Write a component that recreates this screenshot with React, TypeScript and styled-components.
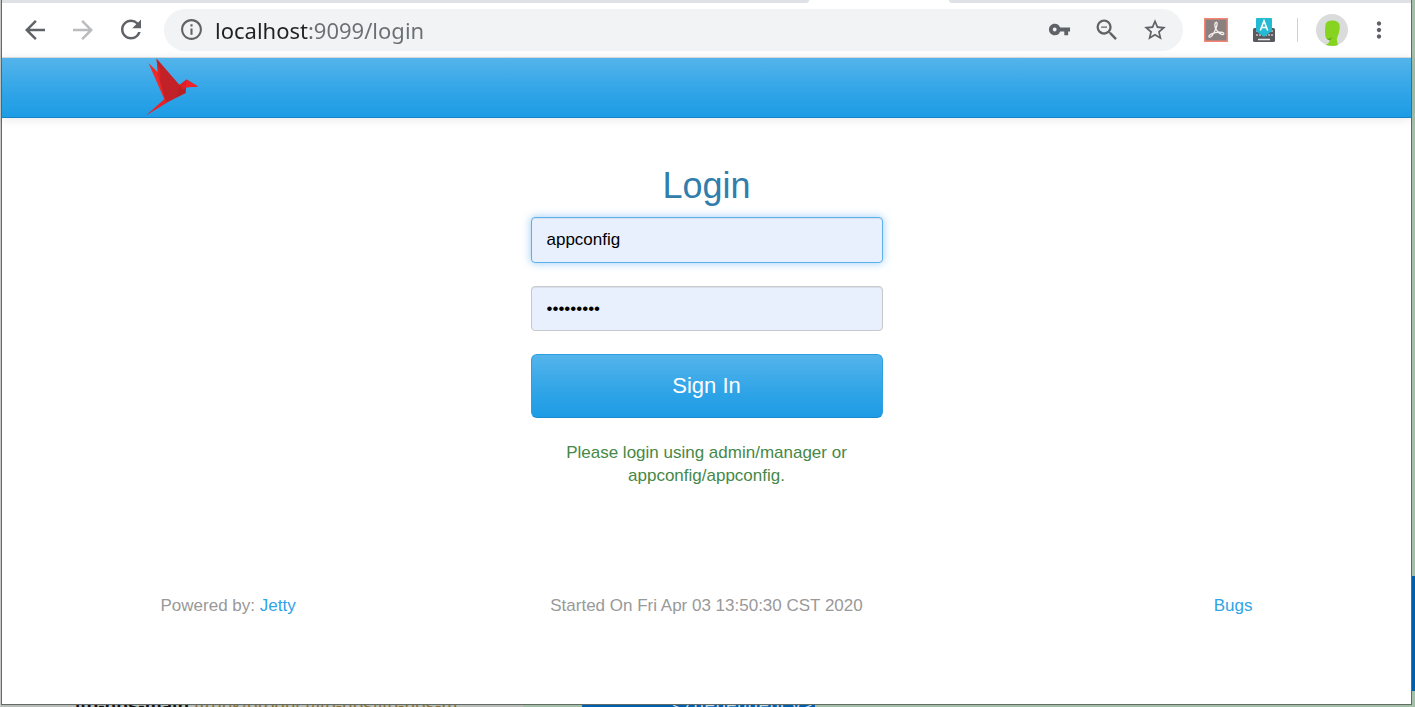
import React, { useState } from "react";
import styled, { createGlobalStyle } from "styled-components";
import {
  MdArrowBack,
  MdArrowForward,
  MdInfoOutline,
  MdMoreVert,
  MdRefresh,
  MdStarBorder,
  MdVpnKey,
  MdZoomOut,
} from "react-icons/md";

const GlobalStyle = createGlobalStyle`
  * { box-sizing: border-box; }
  body {
    margin: 0;
    font-family: "Liberation Sans", Arial, sans-serif;
    font-size: 17px;
    line-height: 23px;
    color: #999;
  }
`;

const Desktop = styled.div`
  display: grid;
  grid-template-columns: minmax(0, 1fr) 3px;
  grid-template-rows: 1fr 2px;
  min-height: 100vh;
  padding-left: 1px;
  background: linear-gradient(90deg, #c4c8c4 1px, #a3bfa8 1px);
`;

const BrowserWindow = styled.div`
  display: flex;
  flex-direction: column;
  border: 1px solid #636b66;
  border-top: 0;
  background: #fff;
`;

const RightEdge = styled.div`
  display: flex;
  flex-direction: column;
  justify-content: flex-end;
  padding-bottom: 14px;
`;

const EdgeSelection = styled.div`
  height: 115px;
  background: #0060b0;
`;

const Behind = styled.div`
  display: flex;
  grid-column: 1 / -1;
  overflow: hidden;
  height: 2px;
  font-size: 19px;
  line-height: 2px;
  white-space: pre;
`;

const ProjectRow = styled.div`
  flex: 0 0 522px;
  padding-left: 74px;
  overflow: hidden;
  background: #b9bdb9;
  color: #8a7430;
`;

const ProjectName = styled.b`
  color: #111;
`;

const EditorRow = styled.div`
  flex: 0 0 292px;
  padding-left: 59px;
  overflow: hidden;
`;

const SelectedCode = styled.div`
  padding-left: 90px;
  background: #0060b0;
  color: #c8d8e4;
  font-family: "Liberation Mono", monospace;
  font-size: 18px;
`;

const TabStrip = styled.div`
  display: flex;
  height: 3px;
  background: #fff;
`;

const InactiveTabs = styled.div<{ $side: "left" | "right" }>`
  flex: ${(p) => (p.$side === "left" ? "807" : "462")} 1 0;
  background: #dee1e6;
  border-radius: ${(p) => (p.$side === "left" ? "0 0 8px 0" : "0 0 0 8px")};
`;

const ActiveTab = styled.div`
  flex: 0 0 140px;
`;

const Toolbar = styled.div`
  display: flex;
  align-items: center;
  gap: 18px;
  height: 55px;
  padding: 0 19px 1px 18px;
  border-bottom: 1px solid #dcdfe2;
`;

const IconButton = styled.button<{ $faded?: boolean; $width?: number }>`
  display: flex;
  flex: none;
  align-items: center;
  justify-content: center;
  width: ${(p) => p.$width ?? 30}px;
  height: 30px;
  padding: 0;
  border: 0;
  background: none;
  color: ${(p) => (p.$faded ? "#babcbe" : "#5f6368")};
`;

const Omnibox = styled.div`
  display: flex;
  flex: 1;
  align-items: center;
  gap: 18px;
  min-width: 0;
  height: 42px;
  padding: 0 13px 0 12px;
  border-radius: 21px;
  background: #f1f3f4;
`;

const AddressGroup = styled.div`
  display: flex;
  flex: 1;
  align-items: center;
  gap: 9px;
  min-width: 0;
`;

const AddressInput = styled.input`
  flex: 1;
  min-width: 0;
  height: 30px;
  padding: 0;
  border: 0;
  outline: 0;
  font: 22px/30px "Noto Sans", sans-serif;
  color: #5f6368;
  background: linear-gradient(90deg, #202124 94px, #6b6f74 94px);
  background-clip: text;
  -webkit-background-clip: text;
  -webkit-text-fill-color: transparent;
`;

const Divider = styled.div`
  width: 1px;
  height: 24px;
  background: #cfd1d4;
`;

const NavBar = styled.header`
  height: 60px;
  border-bottom: 1px solid #1683c9;
  background: linear-gradient(#54b4eb, #2fa4e7 60%, #1d9ce5);
  box-shadow: 0 1px 10px rgba(0, 0, 0, 0.1);
`;

const NavInner = styled.div`
  width: 100%;
  max-width: 1122px;
  margin: 0 auto;
`;

const Brand = styled.a`
  display: block;
  width: 53px;
  height: 59px;
`;

const Main = styled.main`
  width: 352px;
  max-width: 100%;
  margin: 48px auto 0;
  text-align: center;
`;

const Title = styled.h1`
  margin: 0 0 11px;
  font-size: 36px;
  font-weight: 400;
  line-height: 40px;
  color: #317eac;
`;

const LoginForm = styled.form`
  display: flex;
  flex-direction: column;
  gap: 23px;
`;

const Field = styled.input<{ $active?: boolean }>`
  width: 100%;
  height: ${(p) => (p.$active ? 46 : 45)}px;
  padding: 0 15px;
  border: 1px solid ${(p) => (p.$active ? "#5fb0ea" : "#c8c9cc")};
  border-radius: 4px;
  outline: 0;
  background: #e8f0fe;
  color: #000;
  font: 17px/23px "Liberation Sans", Arial, sans-serif;
  box-shadow: ${(p) =>
    p.$active
      ? "inset 0 1px 1px rgba(0,0,0,.075), 0 0 8px rgba(82,168,236,.6)"
      : "inset 0 1px 1px rgba(0,0,0,.075)"};
`;

const SubmitButton = styled.button`
  height: 64px;
  border: 1px solid #2a9fe2;
  border-bottom-color: #178acc;
  border-radius: 6px;
  background: linear-gradient(#54b4eb, #2fa4e7 60%, #1d9ce5);
  color: #fff;
  font: 22px/28px "Liberation Sans", Arial, sans-serif;
`;

const Hint = styled.p`
  margin: 23px 0 0;
  color: #468847;
`;

const Footer = styled.footer`
  display: grid;
  grid-template-columns: 1fr auto 1fr;
  width: 100%;
  max-width: 1122px;
  margin: 107px auto 0;
  padding: 0 15px 87px;
`;

const FooterEnd = styled.div`
  text-align: right;
`;

const Link = styled.a`
  color: #2fa4e7;
  text-decoration: none;
`;

const Bird = () => (
  <svg width="53" height="59" viewBox="0 0 53 59" aria-hidden="true">
    <path d="M2.500 5 12 14.500 20 44 18.200 41Z" fill="#f02a27" />
    <path d="M10.500.5 33.500 27 39.500 29.300V35L20 45 13 20Z" fill="#c22127" />
    <path d="M10.500.5 14.500 14 14 26 20 45 12 18Z" fill="#dc2427" />
    <path d="M33.500 27 40.500 22 39.500 35 30 39.500Z" fill="#b92026" />
    <path d="M33.500 27 40.500 21.500 52 28.500 39.500 29.500 37 32Z" fill="#d92127" />
    <path d="M40.500 21.500 52 28.500 39.500 29.300Z" fill="#f02127" />
    <path d="M18.500 41 20.500 45 0 57.500Z" fill="#e92229" />
  </svg>
);

const AcrobatIcon = () => (
  <svg width="24" height="24" viewBox="0 0 24 24" aria-hidden="true">
    <rect x="0.75" y="0.75" width="22.5" height="22.5" fill="#8b8080" stroke="#f58573" strokeWidth="1.5" />
    <path
      d="M11.2 5.2c1-2 2.4-.5 1.8 1.8-.9 4-4 10.8-6.500 12-1.600.5-2.200-.8-.8-2 2.500-2.100 9.300-3.400 12.800-2.600 2.200.7 1.300 2.600-.7 2-3.300-1.100-7.200-5.500-7-9.500 0-.7.100-1.200.400-1.700Z"
      fill="none"
      stroke="#f3efef"
      strokeWidth="1.3"
    />
  </svg>
);

const KeyboardIcon = () => (
  <svg width="24" height="24" viewBox="0 0 24 24" aria-hidden="true">
    <rect x="1" y="10" width="22" height="14" rx="1.500" fill="#58595c" />
    <path d="M4 13h2M4 17h2M7 17h2M10 17h2M13 17h2M16 17h2M19 17h2M19 13h2" stroke="#c3c4c6" strokeWidth="1.500" />
    <path d="M6 21.500h12" stroke="#e5e6e8" strokeWidth="1.500" />
    <path d="M4 1q0-1 1-1h14q1 0 1 1v12l-8 6-8-6Z" fill="#24bad3" />
    <path d="m8.300 12.500 3.700-9.500L15.700 12.500M9.600 9.500h4.800" fill="none" stroke="#fff" strokeWidth="1.600" />
  </svg>
);

const AvatarIcon = () => (
  <svg width="32" height="32" viewBox="0 0 32 32" aria-hidden="true">
    <circle cx="16" cy="16" r="16" fill="#dadbdb" />
    <path
      d="M9.500 11C10 7.500 13 6.500 16.500 6.500S23.500 8 23.700 12c.2 4-1 8-2.500 11-.7 2-.2 4.500.8 8-4 1.500-8.500 1.200-12.500-.5 2.500-.7 4-2.200 4-4.300-2.500-.2-4-2.200-4.300-5.200-.3-3.500-.2-7 .3-10Z"
      fill="#86d420"
    />
    <path d="M11 24.200c1.500.9 3.300.4 5-1.200-.3 1.700-1.200 3-2.500 3.200-1.200-.2-2-.8-2.500-2Z" fill="#5fa51c" />
  </svg>
);

export default function App() {
  const [address, setAddress] = useState("localhost:9099/login");
  const [user, setUser] = useState("appconfig");
  const [password, setPassword] = useState("appconfig");

  return (
    <Desktop>
      <GlobalStyle />
      <BrowserWindow>
        <TabStrip>
          <InactiveTabs $side="left" />
          <ActiveTab />
          <InactiveTabs $side="right" />
        </TabStrip>
        <Toolbar>
          <IconButton aria-label="Back"><MdArrowBack size={30} /></IconButton>
          <IconButton aria-label="Forward" $faded><MdArrowForward size={30} /></IconButton>
          <IconButton aria-label="Reload"><MdRefresh size={31} /></IconButton>
          <Omnibox>
            <AddressGroup>
              <IconButton aria-label="Site information"><MdInfoOutline size={25} /></IconButton>
              <AddressInput
                aria-label="Address"
                spellCheck={false}
                value={address}
                onChange={(e) => setAddress(e.target.value)}
              />
            </AddressGroup>
            <IconButton aria-label="Saved passwords"><MdVpnKey size={23} /></IconButton>
            <IconButton aria-label="Zoom out"><MdZoomOut size={28} /></IconButton>
            <IconButton aria-label="Bookmark"><MdStarBorder size={26} /></IconButton>
          </Omnibox>
          <IconButton aria-label="Acrobat"><AcrobatIcon /></IconButton>
          <IconButton aria-label="Input tools"><KeyboardIcon /></IconButton>
          <Divider />
          <IconButton aria-label="Profile" $width={32}><AvatarIcon /></IconButton>
          <IconButton aria-label="Menu" $width={26}><MdMoreVert size={30} /></IconButton>
        </Toolbar>

        <NavBar>
          <NavInner>
            <Brand href="#" aria-label="Home"><Bird /></Brand>
          </NavInner>
        </NavBar>

        <Main>
          <Title>Login</Title>
          <LoginForm onSubmit={(e) => e.preventDefault()}>
            <Field
              $active
              type="text"
              aria-label="Username"
              value={user}
              onChange={(e) => setUser(e.target.value)}
            />
            <Field
              type="password"
              aria-label="Password"
              value={password}
              onChange={(e) => setPassword(e.target.value)}
            />
            <SubmitButton type="submit">Sign In</SubmitButton>
          </LoginForm>
          <Hint>Please login using admin/manager or appconfig/appconfig.</Hint>
        </Main>

        <Footer>
          <div>Powered by: <Link href="#">Jetty</Link></div>
          <div>Started On Fri Apr 03 13:50:30 CST 2020</div>
          <FooterEnd><Link href="#">Bugs</Link></FooterEnd>
        </Footer>
      </BrowserWindow>
      <RightEdge>
        <EdgeSelection />
      </RightEdge>
      <Behind aria-hidden="true">
        <ProjectRow>
          <ProjectName>itp-nps-main</ProjectName> [trunk/product/itp-nps/itp-nps-m
        </ProjectRow>
        <EditorRow>
          <SelectedCode>{"</dependency>"}</SelectedCode>
        </EditorRow>
      </Behind>
    </Desktop>
  );
}
